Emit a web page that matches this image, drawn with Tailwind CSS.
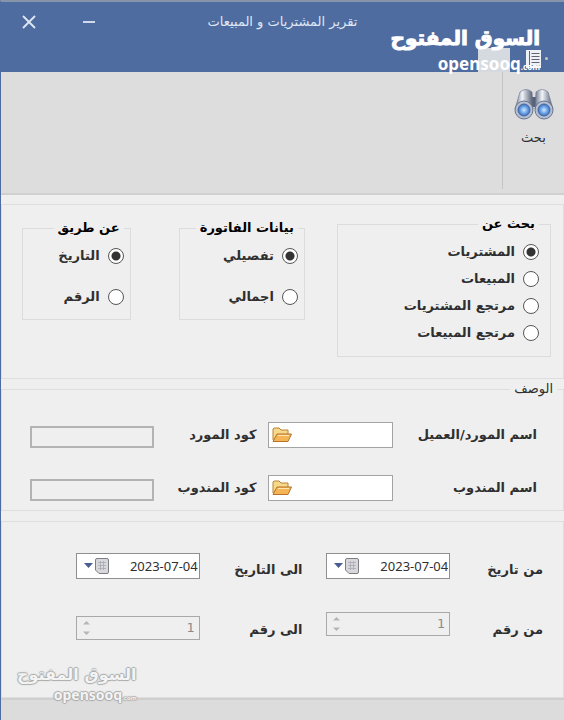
<!DOCTYPE html>
<html lang="ar" dir="rtl">

<head>
  <meta charset="UTF-8">
  <meta name="viewport" content="width=device-width, initial-scale=1.0">
  <title>تقرير المشتريات و المبيعات</title>
  <script src="https://cdn.jsdelivr.net/npm/@tailwindcss/browser@4"></script>
</head>

<body class="bg-[#efefef] font-['DejaVu_Sans',sans-serif] text-[13px] text-[#2f2f2f]">
  <div class="relative min-h-screen flex flex-col border-t-2 border-t-[#8795ab] border-l border-l-[#4e6c9f]">

    <!-- Title bar -->
    <header class="h-[70px] bg-[#4e6c9f] text-[#dfe7f5]">
      <div class="grid grid-cols-[1fr_auto_1fr] items-center h-10">
        <span></span>
        <h1>تقرير المشتريات و المبيعات</h1>
        <div class="flex justify-end items-center gap-11 pl-5">
          <button type="button" aria-label="تصغير">
            <svg class="size-4" viewBox="0 0 16 16" stroke="currentColor" stroke-width="1.8"><path d="M2 8h12" /></svg>
          </button>
          <button type="button" aria-label="إغلاق">
            <svg class="size-4" viewBox="0 0 16 16" stroke="currentColor" stroke-width="1.8"><path d="M2 2l12 12M14 2L2 14" /></svg>
          </button>
        </div>
      </div>
      <div class="flex items-end h-[30px] pr-4">
        <span class="size-[3px] rounded-full bg-[#c9c9b8] mb-3 ml-1"></span>
        <button type="button" aria-label="القائمة" class="mb-1">
          <svg class="h-[18px] w-[15px]" viewBox="0 0 15 18">
            <rect x="0" y="0" width="15" height="18" fill="#eef1f5" />
            <path d="M3.500 1v16M5.500 3.500h8M5.500 6.500h8M5.500 9.500h8M5.500 12.500h8M5.500 15.500h8" stroke="#5f6672" stroke-width="1" />
          </svg>
        </button>
        <span class="w-8 h-6 bg-[#d5d9e0] mr-4"></span>
      </div>
    </header>

    <!-- Ribbon -->
    <div class="flex h-[123px] bg-[#dddddd] border-b-2 border-[#d0d0d0]">
      <div class="w-[62px] border-l border-[#c4c4c4] mb-1 pt-4">
        <button type="button" class="w-full flex flex-col items-center gap-2">
          <svg class="w-10 h-8" viewBox="0 0 40 32">
            <defs>
              <linearGradient id="tube" x1="0" x2="1" y1="0" y2="0">
                <stop offset="0" stop-color="#69738a" />
                <stop offset=".4" stop-color="#f1f4f9" />
                <stop offset="1" stop-color="#4f586e" />
              </linearGradient>
              <radialGradient id="lens">
                <stop offset="0" stop-color="#cfe8ff" />
                <stop offset=".6" stop-color="#6aa2e6" />
                <stop offset="1" stop-color="#3a6cba" />
              </radialGradient>
            </defs>
            <rect x="15" y="9" width="10" height="10" rx="2" fill="#56607a" />
            <path d="M6 4q6-5 12 0l1 17H1z" fill="url(#tube)" stroke="#667088" stroke-width=".6" />
            <path d="M22 4q6-5 12 0l5 17H21z" fill="url(#tube)" stroke="#667088" stroke-width=".6" />
            <circle cx="10" cy="22" r="9" fill="#b4bfd2" stroke="#6a758e" />
            <circle cx="10" cy="22" r="6" fill="url(#lens)" stroke="#4a699f" />
            <circle cx="30" cy="22" r="9" fill="#b4bfd2" stroke="#6a758e" />
            <circle cx="30" cy="22" r="6" fill="url(#lens)" stroke="#4a699f" />
          </svg>
          <span>بحث</span>
        </button>
      </div>
    </div>

    <main class="flex-1 pt-[9px]">
      <!-- Report options -->
      <section class="flex items-start h-[175px] border border-[#dedede] pt-[9px] pr-3 font-bold">
        <fieldset class="w-[39%] h-[143px] border border-[#dcdcdc] pr-[11px]">
          <legend class="leading-5 px-1 text-black">بحث عن</legend>
          <div class="flex flex-col gap-[7px] pt-2">
            <label class="flex items-center gap-2 leading-5"><input type="radio" name="kind" checked class="appearance-none size-4 rounded-full border border-[#555] bg-white checked:bg-[radial-gradient(circle,#333_4px,#fff_5px)]">المشتريات</label>
            <label class="flex items-center gap-2 leading-5"><input type="radio" name="kind" class="appearance-none size-4 rounded-full border border-[#555] bg-white checked:bg-[radial-gradient(circle,#333_4px,#fff_5px)]">المبيعات</label>
            <label class="flex items-center gap-2 leading-5"><input type="radio" name="kind" class="appearance-none size-4 rounded-full border border-[#555] bg-white checked:bg-[radial-gradient(circle,#333_4px,#fff_5px)]">مرتجع المشتريات</label>
            <label class="flex items-center gap-2 leading-5"><input type="radio" name="kind" class="appearance-none size-4 rounded-full border border-[#555] bg-white checked:bg-[radial-gradient(circle,#333_4px,#fff_5px)]">مرتجع المبيعات</label>
          </div>
        </fieldset>
        <fieldset class="w-[23%] h-[92px] border border-[#dcdcdc] mt-1 mr-8 pr-[6px] min-h-[102px]">
          <legend class="leading-5 px-1 text-black whitespace-nowrap">بيانات الفاتورة</legend>
          <div class="flex flex-col gap-[21px] pt-2">
            <label class="flex items-center gap-2 leading-5"><input type="radio" name="detail" checked class="appearance-none size-4 rounded-full border border-[#555] bg-white checked:bg-[radial-gradient(circle,#333_4px,#fff_5px)]">تفصيلي</label>
            <label class="flex items-center gap-2 leading-5"><input type="radio" name="detail" class="appearance-none size-4 rounded-full border border-[#555] bg-white checked:bg-[radial-gradient(circle,#333_4px,#fff_5px)]">اجمالي</label>
          </div>
        </fieldset>
        <fieldset class="flex-1 h-[102px] border border-[#dcdcdc] mt-1 mr-12 ml-5 pr-[6px]">
          <legend class="leading-5 px-1 text-black">عن طريق</legend>
          <div class="flex flex-col gap-[21px] pt-2">
            <label class="flex items-center gap-2 leading-5"><input type="radio" name="by" checked class="appearance-none size-4 rounded-full border border-[#555] bg-white checked:bg-[radial-gradient(circle,#333_4px,#fff_5px)]">التاريخ</label>
            <label class="flex items-center gap-2 leading-5"><input type="radio" name="by" class="appearance-none size-4 rounded-full border border-[#555] bg-white checked:bg-[radial-gradient(circle,#333_4px,#fff_5px)]">الرقم</label>
          </div>
        </fieldset>
      </section>

      <!-- Description -->
      <fieldset class="border border-[#dedede] pr-[6px]">
        <legend class="leading-5 px-1 text-[13px]">الوصف</legend>
        <div class="grid grid-cols-[minmax(0,144fr)_minmax(0,124fr)_minmax(0,114fr)_minmax(0,124fr)] gap-y-[27px] items-center pt-[23px] pb-[9px] pr-5 pl-7 font-bold whitespace-nowrap">
          <label for="client">اسم المورد/العميل</label>
          <div class="flex items-center h-[26px] bg-white border border-[#a3a3a3] pl-[3px]">
            <input id="client" type="text" class="flex-1 min-w-0 h-full px-1 outline-none">
            <button type="button" aria-label="فتح">
              <svg class="w-5 h-4" viewBox="0 0 20 16">
                <path d="M1 13V2l1-1h5l2 2h7v4" fill="#f7d98c" stroke="#b98233" />
                <path d="M1 14.500L5 7h14.500L16 14.500z" fill="#f5b555" stroke="#b4722a" />
                <path d="M6 8.500h11" stroke="#fde6b0" />
              </svg>
            </button>
          </div>
          <label for="client-code" class="pr-3">كود المورد</label>
          <input id="client-code" type="text" disabled class="w-full h-[22px] mt-1 border-2 border-[#b3b3b3] bg-[#efefef]">

          <label for="agent">اسم المندوب</label>
          <div class="flex items-center h-[26px] bg-white border border-[#a3a3a3] pl-[3px]">
            <input id="agent" type="text" class="flex-1 min-w-0 h-full px-1 outline-none">
            <button type="button" aria-label="فتح">
              <svg class="w-5 h-4" viewBox="0 0 20 16">
                <path d="M1 13V2l1-1h5l2 2h7v4" fill="#f7d98c" stroke="#b98233" />
                <path d="M1 14.500L5 7h14.500L16 14.500z" fill="#f5b555" stroke="#b4722a" />
                <path d="M6 8.500h11" stroke="#fde6b0" />
              </svg>
            </button>
          </div>
          <label for="agent-code" class="pr-3">كود المندوب</label>
          <input id="agent-code" type="text" disabled class="w-full h-[22px] mt-1 border-2 border-[#b3b3b3] bg-[#efefef]">
        </div>
      </fieldset>

      <!-- Range -->
      <section class="grid grid-cols-[minmax(0,93fr)_minmax(0,124fr)_minmax(0,127fr)_minmax(0,124fr)] content-start gap-y-8 items-center h-[177px] mt-[10px] pt-[30px] pr-5 pl-[74px] border border-[#dedede] font-bold whitespace-nowrap">
        <label for="from-date" class="pt-2">من تاريخ</label>
        <div class="flex items-center h-[26px] bg-white border border-[#8f8f8f] pl-[7px] font-normal">
          <input id="from-date" type="text" dir="ltr" value="2023-07-04" class="flex-1 min-w-0 h-full text-right pr-px font-['Noto_Sans',sans-serif] outline-none">
          <button type="button" aria-label="التقويم" class="flex items-center gap-[2px]">
            <svg class="w-[14px] h-4" viewBox="0 0 14 16">
              <path d="M2 .5h10q1.500 0 1.500 1.500v12q0 1.500-1.500 1.500H4L.5 12V2Q.5.5 2 .5z" fill="#d8d8dc" stroke="#7d7d84" />
              <path d="M3 4.500h8M3 7.500h8M3 10.500h8M5.500 3v9M8.500 3v9" stroke="#a9a9b2" stroke-width=".8" />
            </svg>
            <svg class="w-[9px] h-[5px]" viewBox="0 0 9 5"><path d="M0 0h9L4.500 5z" fill="#4a5d94" /></svg>
          </button>
        </div>
        <label for="to-date" class="pr-6 pt-2">الى التاريخ</label>
        <div class="flex items-center h-[26px] bg-white border border-[#8f8f8f] pl-[7px] font-normal">
          <input id="to-date" type="text" dir="ltr" value="2023-07-04" class="flex-1 min-w-0 h-full text-right pr-px font-['Noto_Sans',sans-serif] outline-none">
          <button type="button" aria-label="التقويم" class="flex items-center gap-[2px]">
            <svg class="w-[14px] h-4" viewBox="0 0 14 16">
              <path d="M2 .5h10q1.500 0 1.500 1.500v12q0 1.500-1.500 1.500H4L.5 12V2Q.5.5 2 .5z" fill="#d8d8dc" stroke="#7d7d84" />
              <path d="M3 4.500h8M3 7.500h8M3 10.500h8M5.500 3v9M8.500 3v9" stroke="#a9a9b2" stroke-width=".8" />
            </svg>
            <svg class="w-[9px] h-[5px]" viewBox="0 0 9 5"><path d="M0 0h9L4.500 5z" fill="#4a5d94" /></svg>
          </button>
        </div>

        <label for="from-no" class="pt-2">من رقم</label>
        <div class="flex items-center h-6 mb-1 border border-[#a9a9a9] pl-[6px] font-normal text-[#8b8b8b]">
          <input id="from-no" type="text" dir="ltr" value="1" disabled class="flex-1 min-w-0 h-full text-right pr-1">
          <svg class="w-[7px] h-[14px]" viewBox="0 0 7 14" fill="#b5b5b5"><path d="M0 3.500L3.500 0L7 3.500zM0 10.500L3.500 14L7 10.500z" /></svg>
        </div>
        <label for="to-no" class="pr-6 pt-2">الى رقم</label>
        <div class="flex items-center h-6 mt-1 border border-[#a9a9a9] pl-[6px] font-normal text-[#8b8b8b]">
          <input id="to-no" type="text" dir="ltr" value="1" disabled class="flex-1 min-w-0 h-full text-right pr-1">
          <svg class="w-[7px] h-[14px]" viewBox="0 0 7 14" fill="#b5b5b5"><path d="M0 3.500L3.500 0L7 3.500zM0 10.500L3.500 14L7 10.500z" /></svg>
        </div>
      </section>
    </main>

    <footer class="h-6 bg-[#dcdcdc] border-t-2 border-[#cfcfcf]"></footer>

    <!-- Watermarks -->
    <div class="absolute top-5 right-6 flex flex-col text-white font-bold pointer-events-none">
      <span class="text-xl leading-8 whitespace-nowrap [-webkit-text-stroke:1px_white]">السوق المفتوح</span>
      <span dir="ltr" class="text-[17px] leading-5 font-['Noto_Sans',sans-serif] self-start">opensooq<span class="text-[8px]">.com</span></span>
    </div>
    <div class="absolute bottom-4 left-4 flex flex-col text-[#f4f4f4] font-bold pointer-events-none [text-shadow:1px_0_1px_#aaa,-1px_0_1px_#aaa,0_1px_1px_#aaa,0_-1px_1px_#aaa]">
      <span class="text-base leading-6 whitespace-nowrap">السوق المفتوح</span>
      <span dir="ltr" class="text-sm leading-4 font-['Noto_Sans',sans-serif] self-start">opensooq<span class="text-[6px]">.com</span></span>
    </div>
  </div>
</body>

</html>
